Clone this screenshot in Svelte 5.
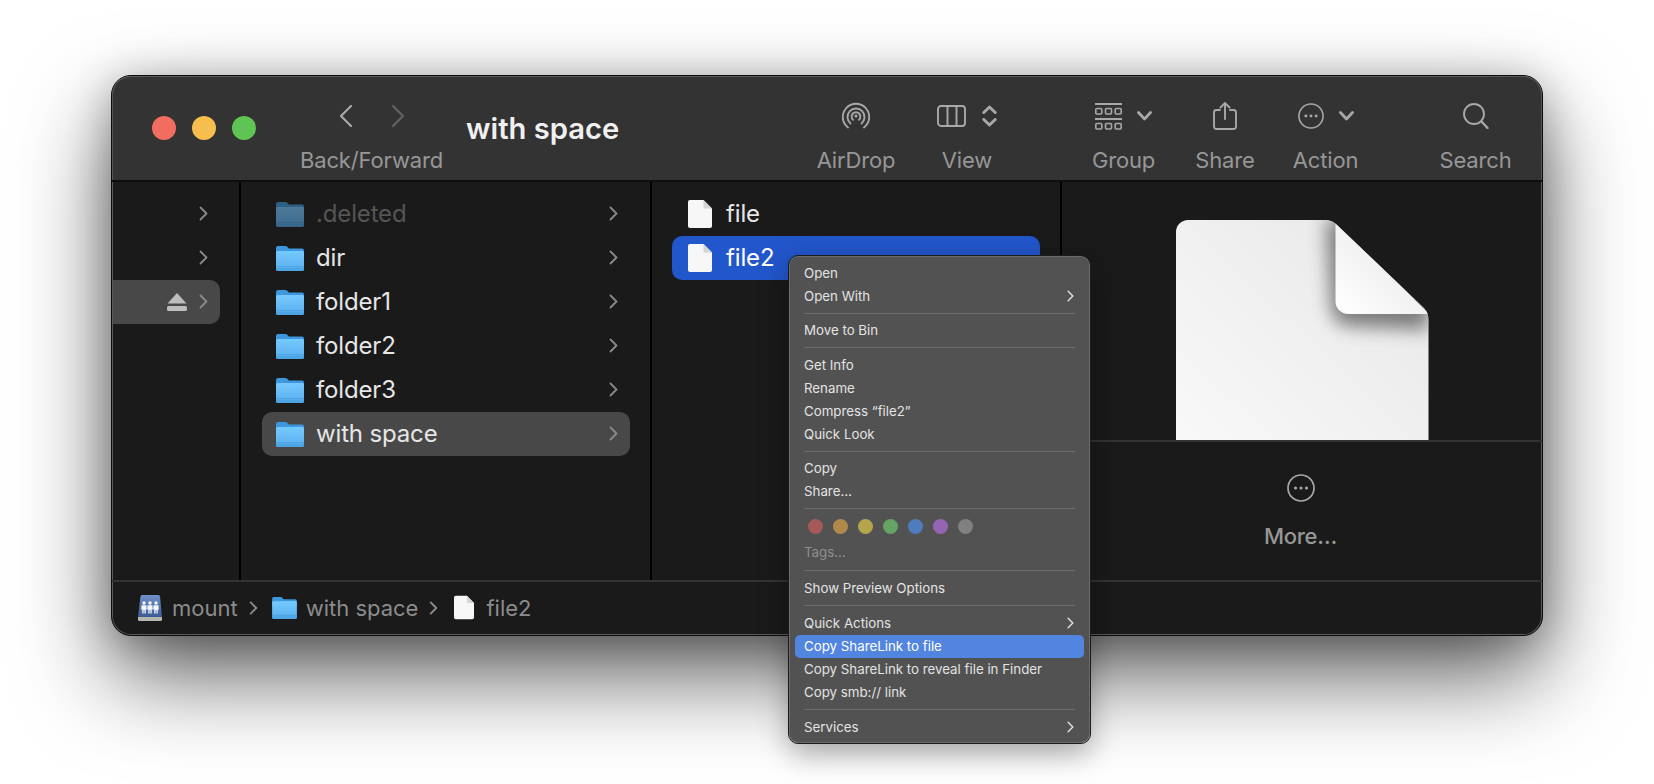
<script>
  const folders = [
    { name: '.deleted', dim: true },
    { name: 'dir' },
    { name: 'folder1' },
    { name: 'folder2' },
    { name: 'folder3' },
    { name: 'with space', selected: true }
  ];
  const files = [{ name: 'file' }, { name: 'file2', selected: true }];
  const tags = ['#a55a59', '#b08a4b', '#b5a64e', '#65a464', '#4f7cbd', '#9465b5', '#808080'];
  const menu = [
    [{ t: 'Open' }, { t: 'Open With', sub: true }],
    [{ t: 'Move to Bin' }],
    [{ t: 'Get Info' }, { t: 'Rename' }, { t: 'Compress “file2”' }, { t: 'Quick Look' }],
    [{ t: 'Copy' }, { t: 'Share…' }],
    'tags',
    [{ t: 'Show Preview Options' }],
    [{ t: 'Quick Actions', sub: true, gap: true }, { t: 'Copy ShareLink to file', on: true }, { t: 'Copy ShareLink to reveal file in Finder' }, { t: 'Copy smb:// link' }],
    [{ t: 'Services', sub: true }]
  ];
</script>

{#snippet folder(cls)}
  <svg class={cls} viewBox="0 0 28 26" aria-hidden="true">
    <path d="M0 3a2 2 0 0 1 2-2h7.5c.8 0 1.2.3 1.7.8L13 3.6h13a2 2 0 0 1 2 2V12H0z" fill="#3d98de" />
    <path d="M0 7.5a1.5 1.5 0 0 1 1.5-1.5h25A1.5 1.5 0 0 1 28 7.5V24a2 2 0 0 1-2 2H2a2 2 0 0 1-2-2z" fill="url(#fold)" />
    <rect y="21.3" width="28" height="1" fill="#4a9fe0" />
    <path d="M0 23h28v1a2 2 0 0 1-2 2H2a2 2 0 0 1-2-2z" fill="#4ea5e6" />
  </svg>
{/snippet}

{#snippet doc(cls)}
  <svg class={cls} viewBox="0 0 24 28" aria-hidden="true">
    <path d="M2 0h13.5L24 8.5V26a2 2 0 0 1-2 2H2a2 2 0 0 1-2-2V2a2 2 0 0 1 2-2z" fill="#f7f7f7" />
    <path d="M15.5 0 24 8.5h-7a1.5 1.5 0 0 1-1.5-1.5z" fill="#d4d4d4" />
  </svg>
{/snippet}

{#snippet chev(cls)}
  <svg class={cls} viewBox="0 0 9 15" aria-hidden="true"><path d="M1.5 1.5 7.5 7.5 1.5 13.5" /></svg>
{/snippet}

{#snippet chevDown()}
  <svg class="down" viewBox="0 0 15 10" aria-hidden="true"><path d="M1.5 1.5 7.5 8 13.5 1.5" /></svg>
{/snippet}

{#snippet dots(cls)}
  <svg class={cls} viewBox="0 0 28 28" aria-hidden="true">
    <circle cx="14" cy="14" r="13" />
    <circle class="fillc" cx="8.5" cy="14" r="1.6" /><circle class="fillc" cx="14" cy="14" r="1.6" /><circle class="fillc" cx="19.5" cy="14" r="1.6" />
  </svg>
{/snippet}

{#snippet person(x)}
  <circle cx={x} cy="8" r="1.700" />
  <path d="M{x - 2.4} 10.200h4.800l.4 4.200h-1.100v4.100h-1.300v-3.600h-.8v3.600h-1.300v-4.100h-1.100z" />
{/snippet}

<svg class="defs" width="0" height="0" aria-hidden="true">
  <defs>
    <linearGradient id="fold" x1="0" y1="0" x2="0" y2="1"><stop offset="0" stop-color="#77caff" /><stop offset="1" stop-color="#57aeee" /></linearGradient>
    <linearGradient id="paper" x1="1" y1="0" x2="0" y2="1"><stop offset="0" stop-color="#e6e6e6" /><stop offset=".5" stop-color="#f0f0f0" /><stop offset="1" stop-color="#f9f9f9" /></linearGradient>
    <linearGradient id="flap" x1="0" y1="1" x2="1" y2="0"><stop offset="0" stop-color="#ffffff" /><stop offset=".55" stop-color="#f0f0f0" /><stop offset="1" stop-color="#d6d6d6" /></linearGradient>
    <linearGradient id="drive" x1="0" y1="0" x2="0" y2="1"><stop offset="0" stop-color="#6f90c8" /><stop offset="1" stop-color="#3d5c97" /></linearGradient>
    <filter id="soft" x="-40%" y="-40%" width="180%" height="180%"><feGaussianBlur stdDeviation="9" /></filter>
    <clipPath id="sheet"><path d="M12 0H150Q156 0 161 5L248 88Q252.500 93 252.500 100V240H0V12A12 12 0 0 1 12 0Z" /></clipPath>
  </defs>
</svg>

<main class="page">
  <div class="window">
    <header class="toolbar">
      <div class="lights">
        <span class="light red"></span><span class="light yellow"></span><span class="light green"></span>
      </div>
      <div class="tool nav">
        <div class="ico">
          <svg class="navchev" viewBox="0 0 15 24" aria-hidden="true"><path d="M13 2 3 12 13 22" /></svg>
          <svg class="navchev off" viewBox="0 0 15 24" aria-hidden="true"><path d="M2 2 12 12 2 22" /></svg>
        </div>
        <span>Back/Forward</span>
      </div>
      <h1 class="title">with space</h1>
      <div class="tool airdrop">
        <div class="ico">
          <svg class="line" width="28" height="28" viewBox="0 0 28 28" aria-hidden="true">
            <path d="M6 25.500A13.200 13.200 0 1 1 22 25.500" /><path d="M8.500 21.500A8.500 8.500 0 1 1 19.500 21.500" /><path d="M11 17.800A4.400 4.400 0 1 1 17 17.800" />
            <circle class="fillc" cx="14" cy="14" r="1.600" />
          </svg>
        </div>
        <span>AirDrop</span>
      </div>
      <div class="tool view">
        <div class="ico">
          <svg class="line" width="29" height="22" viewBox="0 0 29 22" aria-hidden="true">
            <rect x="1" y="1" width="27" height="20" rx="3" /><path d="M10.500 1V21M19.500 1V21" />
          </svg>
          <svg class="updown" width="15" height="22" viewBox="0 0 15 22" aria-hidden="true"><path d="M1.800 7.500 7.500 2l5.700 5.500M1.800 14.500 7.500 20l5.700-5.500" /></svg>
        </div>
        <span>View</span>
      </div>
      <div class="tool group">
        <div class="ico">
          <svg class="line thin" width="27" height="27" viewBox="0 0 27 27" aria-hidden="true">
            <path d="M0 1H27M0 16H27" stroke-width="2" stroke-linecap="butt" />
            <rect x=".8" y="5.500" width="6" height="5.500" rx="1" /><rect x="10.500" y="5.500" width="6" height="5.500" rx="1" /><rect x="20.200" y="5.500" width="6" height="5.500" rx="1" />
            <rect x=".8" y="20.500" width="6" height="5.500" rx="1" /><rect x="10.500" y="20.500" width="6" height="5.500" rx="1" /><rect x="20.200" y="20.500" width="6" height="5.500" rx="1" />
          </svg>
          {@render chevDown()}
        </div>
        <span>Group</span>
      </div>
      <div class="tool share">
        <div class="ico">
          <svg class="line" width="24" height="28" viewBox="0 0 24 28" aria-hidden="true">
            <path d="M7 8H3.500A2.500 2.500 0 0 0 1 10.500v14A2.500 2.500 0 0 0 3.500 27h17a2.500 2.500 0 0 0 2.500-2.500v-14A2.500 2.500 0 0 0 20.500 8H17" /><path d="M12 17V1M7.500 5.500 12 1l4.500 4.500" />
          </svg>
        </div>
        <span>Share</span>
      </div>
      <div class="tool action">
        <div class="ico">
          {@render dots('circ')}
          {@render chevDown()}
        </div>
        <span>Action</span>
      </div>
      <div class="tool search">
        <div class="ico">
          <svg class="line" width="26" height="26" viewBox="0 0 26 26" aria-hidden="true"><circle cx="11" cy="11" r="10" /><path d="M18.500 18.500 24.500 25" stroke-width="2.400" /></svg>
        </div>
        <span>Search</span>
      </div>
    </header>

    <div class="body">
      <nav class="col side">
        <div class="srow">{@render chev('rowchev')}</div>
        <div class="srow">{@render chev('rowchev')}</div>
        <div class="srow active">
          <svg class="eject" viewBox="0 0 20 18" aria-hidden="true"><path d="M10 0 19.500 10.500H.5z" /><rect y="13" width="20" height="5" rx="1.500" /></svg>
          {@render chev('rowchev')}
        </div>
      </nav>
      <section class="col list">
        {#each folders as f}
          <div class="row" class:sel={f.selected} class:dim={f.dim}>
            {@render folder('rowfolder')}
            <span class="name">{f.name}</span>
            {@render chev('rowchev')}
          </div>
        {/each}
      </section>
      <section class="col list second">
        {#each files as f}
          <div class="row" class:hot={f.selected}>
            {@render doc('rowdoc')}
            <span class="name">{f.name}</span>
          </div>
        {/each}
      </section>
      <aside class="preview">
        <div class="thumb">
          <svg class="bigdoc" width="253" height="220" viewBox="0 0 253 220" aria-hidden="true">
            <g clip-path="url(#sheet)">
              <rect width="253" height="240" fill="url(#paper)" />
              <path d="M150 0 155 88Q157 104 172 106L253 110V0Z" fill="#555" opacity=".75" filter="url(#soft)" />
              <path d="M159.500 0 253 94H172A12.500 12.500 0 0 1 159.500 81.500Z" fill="url(#flap)" />
            </g>
          </svg>
        </div>
        <div class="more">
          {@render dots('morecirc')}
          <span>More…</span>
        </div>
      </aside>
    </div>

    <footer class="status">
      <svg class="mount" viewBox="0 0 24 26" aria-hidden="true">
        <path d="M2.500 1.500A1.500 1.500 0 0 1 4 0h16.500A1.500 1.500 0 0 1 22 1.500L24 22H0z" fill="url(#drive)" />
        <path d="M0 22h24v2.500a1.500 1.500 0 0 1-1.500 1.500h-21A1.500 1.500 0 0 1 0 24.500z" fill="#b5b5b0" />
        <g fill="#f4f6fa">
          {@render person(6)}
          {@render person(12)}
          {@render person(18)}
        </g>
      </svg>
      <span>mount</span>
      {@render chev('crumb')}
      {@render folder('crumbfolder')}
      <span>with space</span>
      {@render chev('crumb')}
      {@render doc('crumbdoc')}
      <span>file2</span>
    </footer>

    <div class="menu" role="menu">
      {#each menu as block, i}
        {#if i > 0}<div class="sep"></div>{/if}
        {#if block === 'tags'}
          <div class="tags">{#each tags as c}<span class="tag" style="background:{c}"></span>{/each}</div>
          <div class="item muted">Tags…</div>
        {:else}
          {#each block as it}
            <div class="item" class:on={it.on} class:gap={it.gap}>
              <span>{it.t}</span>
              {#if it.sub}{@render chev('subchev')}{/if}
            </div>
          {/each}
        {/if}
      {/each}
    </div>
  </div>
</main>

<style>
  :global(body) { margin: 0; background: #fff; overflow: hidden; }
  .defs { position: absolute; }
  .page {
    width: 1654px; height: 784px; box-sizing: border-box; padding: 75px 0 0 111px;
    font-family: Inter, "Liberation Sans", sans-serif;
  }
  .window {
    position: relative; width: 1432px; height: 561px; box-sizing: border-box;
    display: flex; flex-direction: column;
    background: #1a1a1a; border: 1px solid #0c0c0c; border-radius: 20px;
    box-shadow: inset 0 0 0 1px #5a5a5a, 0 40px 90px rgba(0,0,0,.62), 0 6px 40px rgba(0,0,0,.25);
  }
  .toolbar {
    height: 106px; flex: none; display: flex; align-items: center; box-sizing: border-box;
    background: #333; border-bottom: 2px solid #0e0e0e; border-radius: 19px 19px 0 0;
    box-shadow: inset 0 1px 0 #5a5a5a, inset 1px 0 0 #555, inset -1px 0 0 #555;
    color: #979797;
  }
  .lights { display: flex; gap: 16px; margin-left: 40px; }
  .light { width: 24px; height: 24px; border-radius: 50%; }
  .red { background: #f26d60; } .yellow { background: #f6bd4f; } .green { background: #5fc454; }
  .tool { display: flex; flex-direction: column; align-items: center; align-self: flex-start; font-size: 22px; letter-spacing: -.15px; line-height: 28px; padding-top: 22px; white-space: nowrap; }
  .ico { height: 36px; margin-bottom: 12px; display: flex; align-items: center; justify-content: center; }
  .nav { margin-left: 44px; width: 143px; }
  .nav .ico { gap: 38px; }
  .navchev { width: 15px; height: 24px; fill: none; stroke: #a8a8a8; stroke-width: 2.200; stroke-linecap: round; stroke-linejoin: round; }
  .navchev.off { stroke: #626262; }
  .title { margin: 1px 0 0 23px; font-size: 29.200px; font-weight: 600; color: #f0f0f0; line-height: 36px; white-space: nowrap; width: 350px; }
  .line { fill: none; stroke: #a8a8a8; stroke-width: 1.900; stroke-linecap: round; }
  .line.thin { stroke-width: 1.600; }
  .updown { fill: none; stroke: #a8a8a8; stroke-width: 3; stroke-linecap: round; stroke-linejoin: round; margin-left: 16px; }
  .down { width: 15px; height: 10px; fill: none; stroke: #a8a8a8; stroke-width: 2.800; stroke-linecap: round; stroke-linejoin: round; margin-left: 15px; }
  .circ, .morecirc { width: 26px; height: 26px; fill: none; stroke: #a8a8a8; stroke-width: 1.700; }
  .line .fillc, .fillc { fill: #a8a8a8; stroke: none; }
  .airdrop { width: 80px; }
  .view { width: 62px; margin-left: 40px; }
  .group { width: 63px; margin-left: 94px; }
  .share { width: 60px; margin-left: 40px; }
  .action { width: 67px; margin-left: 37px; }
  .search { width: 73px; margin-left: 80px; }

  .body { flex: 1; display: flex; min-height: 0; }
  .col { box-sizing: border-box; border-right: 2px solid #000; }
  .side { width: 129px; padding-top: 9.500px; }
  .srow { height: 44px; display: flex; align-items: center; justify-content: flex-end; padding-right: 12px; gap: 12px; margin-right: 19px; }
  .srow.active { background: #484848; border-radius: 0 10px 10px 0; margin-left: 1px; }
  .eject { width: 20px; height: 18px; fill: #bdbdbd; }
  .list { width: 411px; padding: 9.500px 20px 0 21px; }
  .second { width: 410px; padding-left: 20px; padding-right: 20px; }
  .row { height: 44px; display: flex; align-items: center; padding: 0 12px 0 14px; border-radius: 10px; color: #e6e6e6; font-size: 24px; letter-spacing: -.15px; box-sizing: border-box; }
  .row.sel { background: #484848; }
  .row.dim { color: #555; }
  .row.dim .rowfolder { opacity: .55; }
  .row.hot { background: #2256cb; color: #fff; }
  .rowfolder { width: 28px; height: 26px; margin-right: 12px; flex: none; }
  .rowdoc { width: 24px; height: 28px; margin-right: 14px; flex: none; }
  .second .row { padding-left: 16px; }
  .name { flex: 1; white-space: nowrap; }
  .rowchev { width: 9px; height: 15px; fill: none; stroke: #8a8a8a; stroke-width: 1.800; stroke-linecap: round; stroke-linejoin: round; flex: none; }

  .preview { flex: 1; display: flex; flex-direction: column; min-width: 0; }
  .thumb { height: 260px; flex: none; box-sizing: border-box; padding-top: 38px; display: flex; justify-content: center; overflow: hidden; border-bottom: 2px solid #333; }
  .bigdoc { flex: none; }
  .more { display: flex; flex-direction: column; align-items: center; padding: 32px 3px 0 0; color: #979797; font-size: 22px; letter-spacing: -.3px; line-height: 28px; font-weight: 500; }
  .morecirc { width: 28px; height: 28px; margin-bottom: 20px; }

  .status { height: 55px; flex: none; box-sizing: border-box; border-top: 2px solid #333; display: flex; align-items: center; padding: 0 0 2px 26px; color: #8c8c8c; font-size: 22px; white-space: nowrap; }
  .mount { width: 24px; height: 26px; margin-right: 10px; }
  .crumb { width: 9px; height: 14px; fill: none; stroke: #8c8c8c; stroke-width: 2; stroke-linecap: round; stroke-linejoin: round; margin: 0 14px 0 11px; }
  .crumbfolder { width: 25px; height: 23px; margin-right: 9px; }
  .crumbdoc { width: 20px; height: 25px; margin: 0 12px 0 2px; }

  .menu {
    position: absolute; left: 677px; top: 180px; width: 300.500px; height: 487px; box-sizing: border-box;
    display: flex; flex-direction: column;
    padding: 4px 5px; background: #525252; border-radius: 9px; border: 1px solid #6a6a6a;
    outline: 1px solid #1c1c1c; box-shadow: 0 10px 30px rgba(0,0,0,.35);
    color: #e3e3e3; font-size: 13.300px;
  }
  .item { flex: none; height: 23px; display: flex; align-items: center; justify-content: space-between; padding: 0 9px; border-radius: 5px; white-space: nowrap; }
  .item.on { background: #5285e0; color: #fff; }
  .item.gap { margin-top: 1px; }
  .item.muted { color: #8f8f8f; margin: 1.500px 0 1px; }
  .sep { flex: none; height: 1px; background: #6c6c6c; margin: 5.500px 9px 5px; }
  .tags { flex: none; height: 25px; display: flex; align-items: center; gap: 10px; padding-left: 13px; box-sizing: border-box; }
  .tag { width: 15px; height: 15px; border-radius: 50%; }
  .subchev { width: 7px; height: 12px; fill: none; stroke: #e3e3e3; stroke-width: 1.800; stroke-linecap: round; stroke-linejoin: round; margin-right: 1px; }
</style>
